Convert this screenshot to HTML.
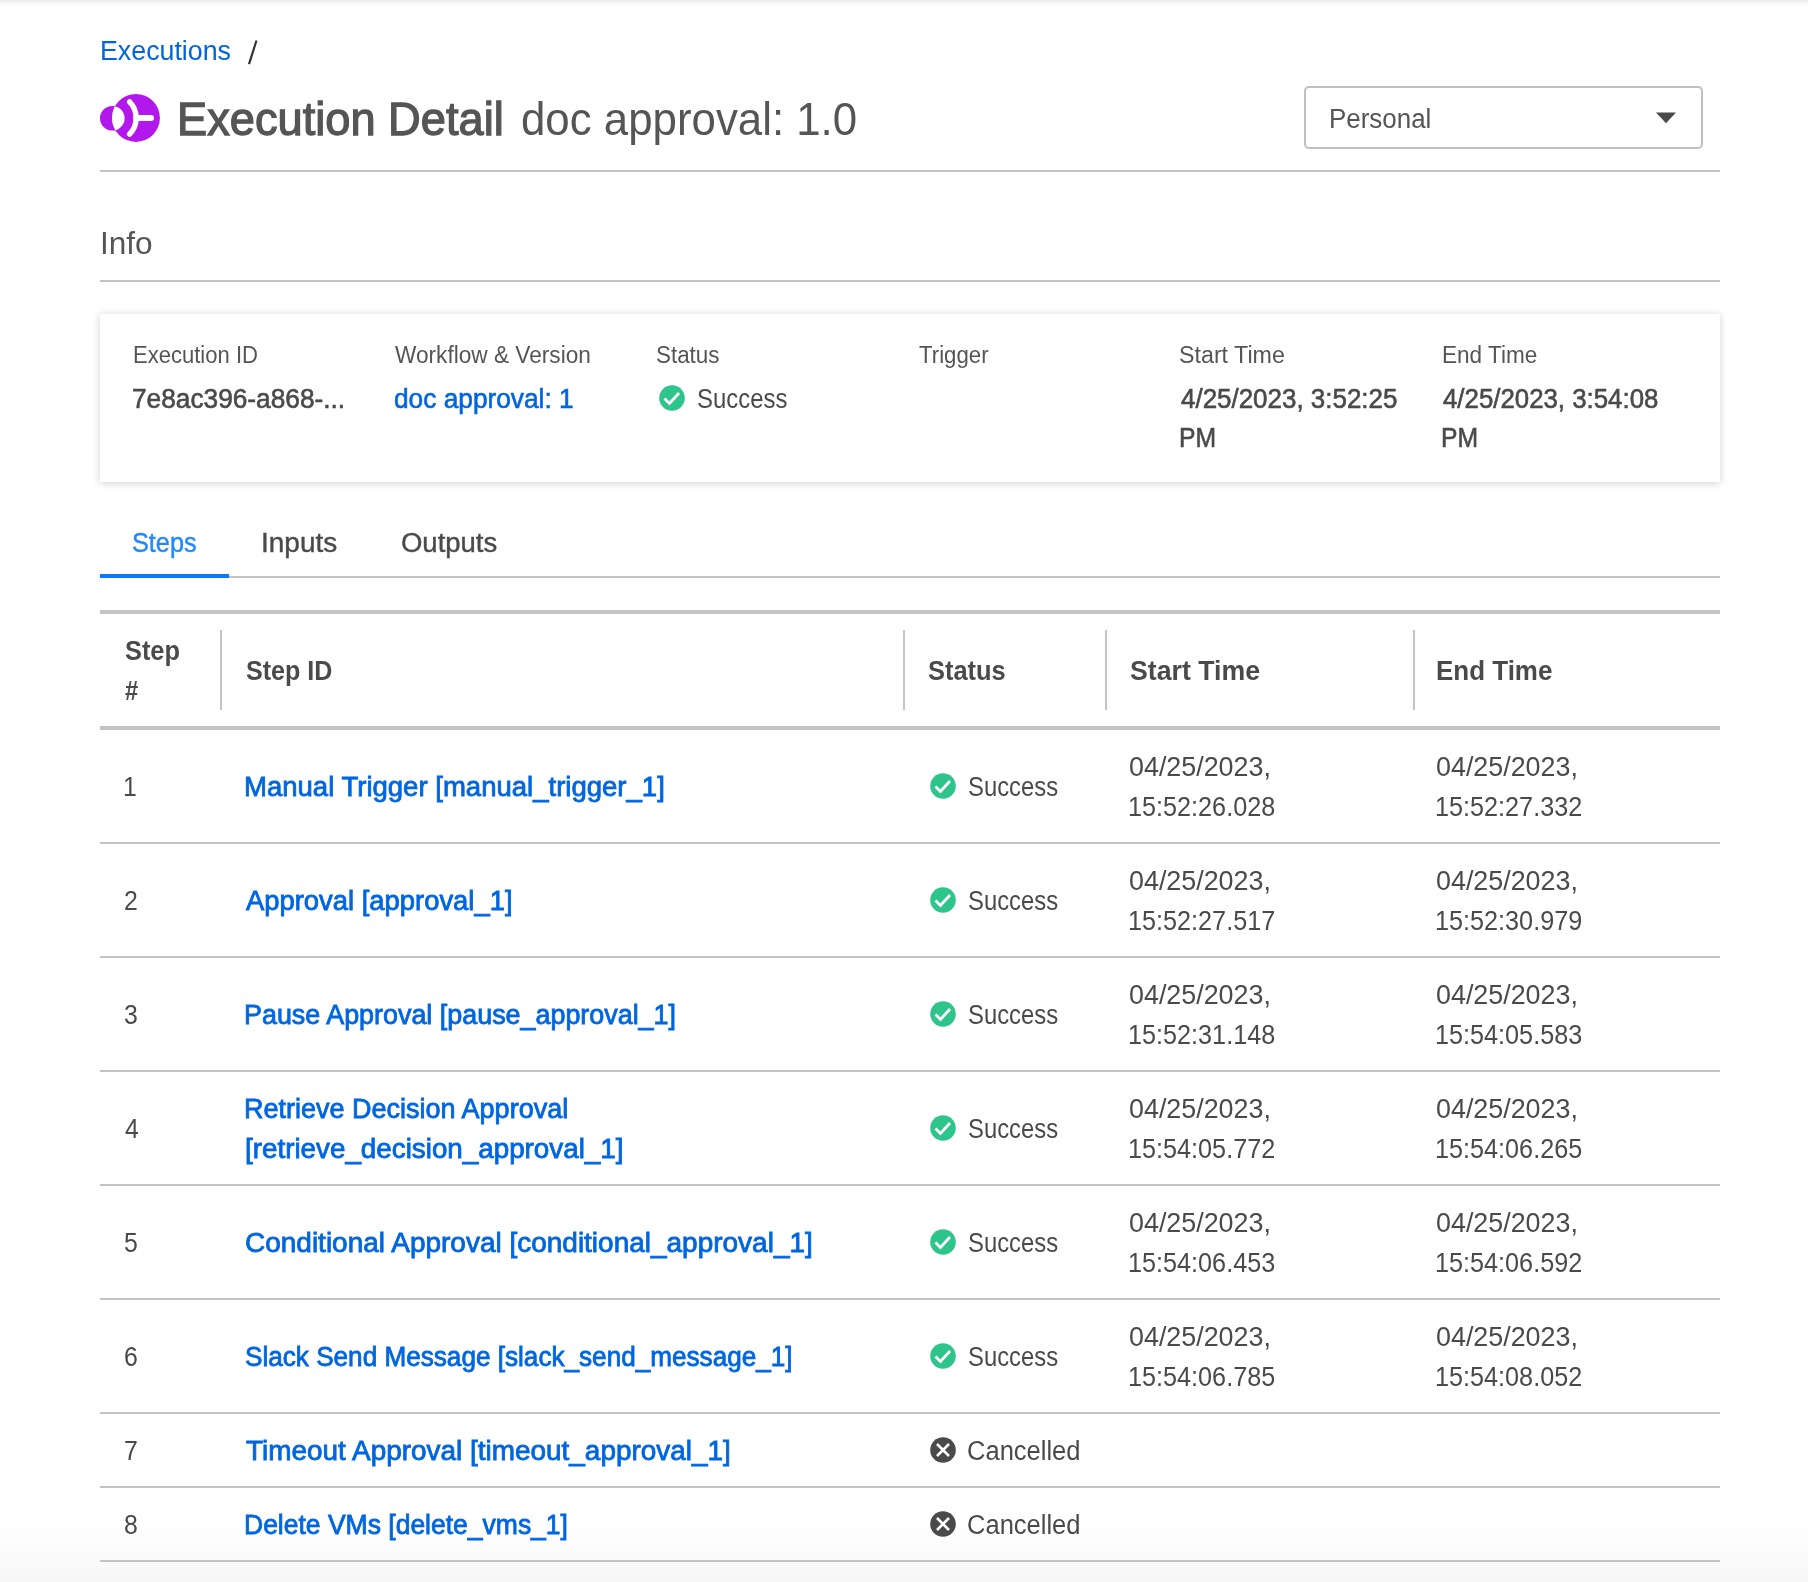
<!DOCTYPE html>
<html><head><meta charset="utf-8"><style>
html,body{margin:0;padding:0;}
body{width:1808px;height:1582px;position:relative;overflow:hidden;background:#fff;font-family:"Liberation Sans",sans-serif;}
.t{position:absolute;white-space:nowrap;transform-origin:0 0;}
.r{position:absolute;}
.txt{position:absolute;left:0;top:0;width:1808px;height:1582px;will-change:transform;}
.topsh{position:absolute;left:0;top:0;width:1808px;height:9px;background:linear-gradient(#e9e9e9 0px,#f4f4f4 2px,#fafafa 4px,#fdfdfd 6px,rgba(255,255,255,0) 9px);}
.botsh{position:absolute;left:0;top:1520px;width:1808px;height:62px;background:linear-gradient(rgba(247,247,247,0),#f7f7f7);}
.card{position:absolute;left:100px;top:314px;width:1620px;height:168px;background:#fff;box-shadow:0 1px 8px rgba(0,0,0,0.19);}
.dd{position:absolute;left:1304px;top:86px;width:395px;height:59px;border:2px solid #bfbfbf;border-radius:5px;background:#fff;}
</style></head><body>
<div class="botsh"></div>
<div class="topsh"></div>
<div class="card"></div>
<div class="dd"></div>
<div class="r" style="left:100px;top:170px;width:1620px;height:2px;background:#c4c4c4"></div><div class="r" style="left:100px;top:280px;width:1620px;height:2px;background:#c4c4c4"></div><div class="r" style="left:100px;top:576px;width:1620px;height:2px;background:#c4c4c4"></div><div class="r" style="left:100px;top:574px;width:129px;height:4px;background:#0a7bff"></div><div class="r" style="left:100px;top:610px;width:1620px;height:4px;background:#c4c4c4"></div><div class="r" style="left:220px;top:630px;width:2px;height:80px;background:#c4c4c4"></div><div class="r" style="left:903px;top:630px;width:2px;height:80px;background:#c4c4c4"></div><div class="r" style="left:1105px;top:630px;width:2px;height:80px;background:#c4c4c4"></div><div class="r" style="left:1413px;top:630px;width:2px;height:80px;background:#c4c4c4"></div><div class="r" style="left:100px;top:726px;width:1620px;height:4px;background:#c4c4c4"></div><div class="r" style="left:100px;top:842px;width:1620px;height:2px;background:#c4c4c4"></div><div class="r" style="left:100px;top:956px;width:1620px;height:2px;background:#c4c4c4"></div><div class="r" style="left:100px;top:1070px;width:1620px;height:2px;background:#c4c4c4"></div><div class="r" style="left:100px;top:1184px;width:1620px;height:2px;background:#c4c4c4"></div><div class="r" style="left:100px;top:1298px;width:1620px;height:2px;background:#c4c4c4"></div><div class="r" style="left:100px;top:1412px;width:1620px;height:2px;background:#c4c4c4"></div><div class="r" style="left:100px;top:1486px;width:1620px;height:2px;background:#c4c4c4"></div><div class="r" style="left:100px;top:1560px;width:1620px;height:2px;background:#c4c4c4"></div>
<svg style="position:absolute;left:0;top:0" width="1808" height="1582" viewBox="0 0 1808 1582">
<path fill="#b218ec" fill-rule="evenodd" d="M111.9 117.9A24 24 0 1 0 159.9 117.9A24 24 0 1 0 111.9 117.9Z M100 118.3A12.3 12.3 0 1 0 124.6 118.3A12.3 12.3 0 1 0 100 118.3Z"/>
<path d="M129.6 101.9A23 23 0 0 1 129.6 134.1" fill="none" stroke="#fff" stroke-width="5.4" stroke-linecap="round"/>
<path d="M136 118H151" fill="none" stroke="#fff" stroke-width="6" stroke-linecap="round"/>
<path d="M1656 112.5H1676L1666 123.3Z" fill="#4a4a4a"/>
<path d="M256.5 40.5L249 64.2" stroke="#333" stroke-width="2.2" fill="none"/>
<circle cx="943" cy="786.0" r="12.8" fill="#2dc58c"/><path d="M935.5 786.4 L940.5 791.4 L950 781.0" fill="none" stroke="#fff" stroke-width="2.8" stroke-linecap="butt" stroke-linejoin="miter"/><circle cx="943" cy="900.0" r="12.8" fill="#2dc58c"/><path d="M935.5 900.4 L940.5 905.4 L950 895.0" fill="none" stroke="#fff" stroke-width="2.8" stroke-linecap="butt" stroke-linejoin="miter"/><circle cx="943" cy="1014.0" r="12.8" fill="#2dc58c"/><path d="M935.5 1014.4 L940.5 1019.4 L950 1009.0" fill="none" stroke="#fff" stroke-width="2.8" stroke-linecap="butt" stroke-linejoin="miter"/><circle cx="943" cy="1128.0" r="12.8" fill="#2dc58c"/><path d="M935.5 1128.4 L940.5 1133.4 L950 1123.0" fill="none" stroke="#fff" stroke-width="2.8" stroke-linecap="butt" stroke-linejoin="miter"/><circle cx="943" cy="1242.0" r="12.8" fill="#2dc58c"/><path d="M935.5 1242.4 L940.5 1247.4 L950 1237.0" fill="none" stroke="#fff" stroke-width="2.8" stroke-linecap="butt" stroke-linejoin="miter"/><circle cx="943" cy="1356.0" r="12.8" fill="#2dc58c"/><path d="M935.5 1356.4 L940.5 1361.4 L950 1351.0" fill="none" stroke="#fff" stroke-width="2.8" stroke-linecap="butt" stroke-linejoin="miter"/><circle cx="943" cy="1450.0" r="12.8" fill="#4a4a4a"/><path d="M937 1444.0 L949 1456.0 M949 1444.0 L937 1456.0" fill="none" stroke="#fff" stroke-width="2.6"/><circle cx="943" cy="1524.0" r="12.8" fill="#4a4a4a"/><path d="M937 1518.0 L949 1530.0 M949 1518.0 L937 1530.0" fill="none" stroke="#fff" stroke-width="2.6"/><circle cx="672" cy="398" r="12.8" fill="#2dc58c"/><path d="M664.5 398.4 L669.5 403.4 L679 393" fill="none" stroke="#fff" stroke-width="2.8"/>
</svg>
<div class="txt"><span class="t" style="left:100.02px;top:34.00px;font-size:27px;line-height:34px;color:#0066e0;transform:scaleX(0.9917);">Executions</span><span class="t" style="left:177.40px;top:90.00px;font-size:46px;line-height:58px;color:#555555;transform:scaleX(0.9829);-webkit-text-stroke:1.3px #555555;">Execution Detail</span><span class="t" style="left:521.35px;top:90.00px;font-size:46px;line-height:58px;color:#555555;transform:scaleX(0.9525);">doc approval: 1.0</span><span class="t" style="left:1329.08px;top:102.00px;font-size:27px;line-height:34px;color:#555555;transform:scaleX(0.9608);">Personal</span><span class="t" style="left:100.33px;top:224.00px;font-size:30.5px;line-height:38px;color:#555555;transform:scaleX(1.0353);">Info</span><span class="t" style="left:132.64px;top:341.00px;font-size:23px;line-height:29px;color:#555555;transform:scaleX(0.9582);">Execution ID</span><span class="t" style="left:395.10px;top:341.00px;font-size:23px;line-height:29px;color:#555555;transform:scaleX(0.9844);">Workflow &amp; Version</span><span class="t" style="left:656.03px;top:341.00px;font-size:23px;line-height:29px;color:#555555;transform:scaleX(0.9732);">Status</span><span class="t" style="left:918.60px;top:341.00px;font-size:23px;line-height:29px;color:#555555;transform:scaleX(0.9663);">Trigger</span><span class="t" style="left:1179.49px;top:341.00px;font-size:23px;line-height:29px;color:#555555;transform:scaleX(1.0104);">Start Time</span><span class="t" style="left:1442.02px;top:341.00px;font-size:23px;line-height:29px;color:#555555;transform:scaleX(0.9814);">End Time</span><span class="t" style="left:132.33px;top:381.50px;font-size:27px;line-height:34px;color:#4a4a4a;transform:scaleX(0.9725);-webkit-text-stroke:0.6px #4a4a4a;">7e8ac396-a868-...</span><span class="t" style="left:394.33px;top:381.50px;font-size:27px;line-height:34px;color:#0066e0;transform:scaleX(0.9731);-webkit-text-stroke:0.6px #0066e0;">doc approval: 1</span><span class="t" style="left:696.61px;top:381.50px;font-size:27px;line-height:34px;color:#4a4a4a;transform:scaleX(0.8852);">Success</span><span class="t" style="left:1180.80px;top:381.50px;font-size:27px;line-height:34px;color:#4a4a4a;transform:scaleX(0.9608);-webkit-text-stroke:0.6px #4a4a4a;">4/25/2023, 3:52:25</span><span class="t" style="left:1178.97px;top:421.00px;font-size:27px;line-height:34px;color:#4a4a4a;transform:scaleX(0.9160);-webkit-text-stroke:0.6px #4a4a4a;">PM</span><span class="t" style="left:1443.30px;top:381.50px;font-size:27px;line-height:34px;color:#4a4a4a;transform:scaleX(0.9563);-webkit-text-stroke:0.6px #4a4a4a;">4/25/2023, 3:54:08</span><span class="t" style="left:1441.47px;top:421.00px;font-size:27px;line-height:34px;color:#4a4a4a;transform:scaleX(0.9160);-webkit-text-stroke:0.6px #4a4a4a;">PM</span><span class="t" style="left:132.46px;top:526.00px;font-size:27px;line-height:34px;color:#1e88ff;transform:scaleX(0.9357);-webkit-text-stroke:0.4px #1e88ff;">Steps</span><span class="t" style="left:261.13px;top:526.00px;font-size:27px;line-height:34px;color:#4a4a4a;transform:scaleX(1.0359);-webkit-text-stroke:0.4px #4a4a4a;">Inputs</span><span class="t" style="left:401.48px;top:526.00px;font-size:27px;line-height:34px;color:#4a4a4a;transform:scaleX(1.0177);-webkit-text-stroke:0.4px #4a4a4a;">Outputs</span><span class="t" style="left:124.90px;top:634.00px;font-size:27px;line-height:34px;color:#4a4a4a;font-weight:700;transform:scaleX(0.9394);">Step</span><span class="t" style="left:124.90px;top:674.00px;font-size:27px;line-height:34px;color:#4a4a4a;font-weight:700;transform:scaleX(0.8800);">#</span><span class="t" style="left:245.70px;top:654.00px;font-size:27px;line-height:34px;color:#4a4a4a;font-weight:700;transform:scaleX(0.9296);">Step ID</span><span class="t" style="left:928.30px;top:654.00px;font-size:27px;line-height:34px;color:#4a4a4a;font-weight:700;transform:scaleX(0.9411);">Status</span><span class="t" style="left:1129.70px;top:654.00px;font-size:27px;line-height:34px;color:#4a4a4a;font-weight:700;transform:scaleX(0.9884);">Start Time</span><span class="t" style="left:1436.34px;top:654.00px;font-size:27px;line-height:34px;color:#4a4a4a;font-weight:700;transform:scaleX(0.9616);">End Time</span><span class="t" style="left:123.16px;top:770.00px;font-size:27px;line-height:34px;color:#4a4a4a;transform:scaleX(0.9200);">1</span><span class="t" style="left:243.96px;top:770.00px;font-size:27px;line-height:34px;color:#0066e0;transform:scaleX(1.0195);-webkit-text-stroke:0.8px #0066e0;">Manual Trigger [manual_trigger_1]</span><span class="t" style="left:967.52px;top:770.00px;font-size:27px;line-height:34px;color:#4a4a4a;transform:scaleX(0.8832);">Success</span><span class="t" style="left:1129.01px;top:750.00px;font-size:27px;line-height:34px;color:#4a4a4a;transform:scaleX(0.9948);">04/25/2023,</span><span class="t" style="left:1128.43px;top:790.00px;font-size:27px;line-height:34px;color:#4a4a4a;transform:scaleX(0.9338);">15:52:26.028</span><span class="t" style="left:1436.31px;top:750.00px;font-size:27px;line-height:34px;color:#4a4a4a;transform:scaleX(0.9948);">04/25/2023,</span><span class="t" style="left:1435.43px;top:790.00px;font-size:27px;line-height:34px;color:#4a4a4a;transform:scaleX(0.9338);">15:52:27.332</span><span class="t" style="left:124.08px;top:884.00px;font-size:27px;line-height:34px;color:#4a4a4a;transform:scaleX(0.9200);">2</span><span class="t" style="left:246.00px;top:884.00px;font-size:27px;line-height:34px;color:#0066e0;transform:scaleX(1.0147);-webkit-text-stroke:0.8px #0066e0;">Approval [approval_1]</span><span class="t" style="left:967.52px;top:884.00px;font-size:27px;line-height:34px;color:#4a4a4a;transform:scaleX(0.8832);">Success</span><span class="t" style="left:1129.01px;top:864.00px;font-size:27px;line-height:34px;color:#4a4a4a;transform:scaleX(0.9948);">04/25/2023,</span><span class="t" style="left:1128.43px;top:904.00px;font-size:27px;line-height:34px;color:#4a4a4a;transform:scaleX(0.9338);">15:52:27.517</span><span class="t" style="left:1436.31px;top:864.00px;font-size:27px;line-height:34px;color:#4a4a4a;transform:scaleX(0.9948);">04/25/2023,</span><span class="t" style="left:1435.43px;top:904.00px;font-size:27px;line-height:34px;color:#4a4a4a;transform:scaleX(0.9338);">15:52:30.979</span><span class="t" style="left:124.08px;top:998.00px;font-size:27px;line-height:34px;color:#4a4a4a;transform:scaleX(0.9200);">3</span><span class="t" style="left:244.01px;top:998.00px;font-size:27px;line-height:34px;color:#0066e0;transform:scaleX(0.9958);-webkit-text-stroke:0.8px #0066e0;">Pause Approval [pause_approval_1]</span><span class="t" style="left:967.52px;top:998.00px;font-size:27px;line-height:34px;color:#4a4a4a;transform:scaleX(0.8832);">Success</span><span class="t" style="left:1129.01px;top:978.00px;font-size:27px;line-height:34px;color:#4a4a4a;transform:scaleX(0.9948);">04/25/2023,</span><span class="t" style="left:1128.43px;top:1018.00px;font-size:27px;line-height:34px;color:#4a4a4a;transform:scaleX(0.9338);">15:52:31.148</span><span class="t" style="left:1436.31px;top:978.00px;font-size:27px;line-height:34px;color:#4a4a4a;transform:scaleX(0.9948);">04/25/2023,</span><span class="t" style="left:1435.43px;top:1018.00px;font-size:27px;line-height:34px;color:#4a4a4a;transform:scaleX(0.9338);">15:54:05.583</span><span class="t" style="left:125.00px;top:1112.00px;font-size:27px;line-height:34px;color:#4a4a4a;transform:scaleX(0.9200);">4</span><span class="t" style="left:244.00px;top:1092.00px;font-size:27px;line-height:34px;color:#0066e0;-webkit-text-stroke:0.8px #0066e0;">Retrieve Decision Approval</span><span class="t" style="left:244.97px;top:1132.00px;font-size:27px;line-height:34px;color:#0066e0;transform:scaleX(1.0292);-webkit-text-stroke:0.8px #0066e0;">[retrieve_decision_approval_1]</span><span class="t" style="left:967.52px;top:1112.00px;font-size:27px;line-height:34px;color:#4a4a4a;transform:scaleX(0.8832);">Success</span><span class="t" style="left:1129.01px;top:1092.00px;font-size:27px;line-height:34px;color:#4a4a4a;transform:scaleX(0.9948);">04/25/2023,</span><span class="t" style="left:1128.43px;top:1132.00px;font-size:27px;line-height:34px;color:#4a4a4a;transform:scaleX(0.9338);">15:54:05.772</span><span class="t" style="left:1436.31px;top:1092.00px;font-size:27px;line-height:34px;color:#4a4a4a;transform:scaleX(0.9948);">04/25/2023,</span><span class="t" style="left:1435.43px;top:1132.00px;font-size:27px;line-height:34px;color:#4a4a4a;transform:scaleX(0.9338);">15:54:06.265</span><span class="t" style="left:124.08px;top:1226.00px;font-size:27px;line-height:34px;color:#4a4a4a;transform:scaleX(0.9200);">5</span><span class="t" style="left:244.96px;top:1226.00px;font-size:27px;line-height:34px;color:#0066e0;transform:scaleX(1.0363);-webkit-text-stroke:0.8px #0066e0;">Conditional Approval [conditional_approval_1]</span><span class="t" style="left:967.52px;top:1226.00px;font-size:27px;line-height:34px;color:#4a4a4a;transform:scaleX(0.8832);">Success</span><span class="t" style="left:1129.01px;top:1206.00px;font-size:27px;line-height:34px;color:#4a4a4a;transform:scaleX(0.9948);">04/25/2023,</span><span class="t" style="left:1128.43px;top:1246.00px;font-size:27px;line-height:34px;color:#4a4a4a;transform:scaleX(0.9338);">15:54:06.453</span><span class="t" style="left:1436.31px;top:1206.00px;font-size:27px;line-height:34px;color:#4a4a4a;transform:scaleX(0.9948);">04/25/2023,</span><span class="t" style="left:1435.43px;top:1246.00px;font-size:27px;line-height:34px;color:#4a4a4a;transform:scaleX(0.9338);">15:54:06.592</span><span class="t" style="left:124.08px;top:1340.00px;font-size:27px;line-height:34px;color:#4a4a4a;transform:scaleX(0.9200);">6</span><span class="t" style="left:245.03px;top:1340.00px;font-size:27px;line-height:34px;color:#0066e0;transform:scaleX(0.9678);-webkit-text-stroke:0.8px #0066e0;">Slack Send Message [slack_send_message_1]</span><span class="t" style="left:967.52px;top:1340.00px;font-size:27px;line-height:34px;color:#4a4a4a;transform:scaleX(0.8832);">Success</span><span class="t" style="left:1129.01px;top:1320.00px;font-size:27px;line-height:34px;color:#4a4a4a;transform:scaleX(0.9948);">04/25/2023,</span><span class="t" style="left:1128.43px;top:1360.00px;font-size:27px;line-height:34px;color:#4a4a4a;transform:scaleX(0.9338);">15:54:06.785</span><span class="t" style="left:1436.31px;top:1320.00px;font-size:27px;line-height:34px;color:#4a4a4a;transform:scaleX(0.9948);">04/25/2023,</span><span class="t" style="left:1435.43px;top:1360.00px;font-size:27px;line-height:34px;color:#4a4a4a;transform:scaleX(0.9338);">15:54:08.052</span><span class="t" style="left:124.08px;top:1434.00px;font-size:27px;line-height:34px;color:#4a4a4a;transform:scaleX(0.9200);">7</span><span class="t" style="left:246.00px;top:1434.00px;font-size:27px;line-height:34px;color:#0066e0;transform:scaleX(1.0342);-webkit-text-stroke:0.8px #0066e0;">Timeout Approval [timeout_approval_1]</span><span class="t" style="left:967.05px;top:1434.00px;font-size:27px;line-height:34px;color:#4a4a4a;transform:scaleX(0.9453);">Cancelled</span><span class="t" style="left:124.08px;top:1508.00px;font-size:27px;line-height:34px;color:#4a4a4a;transform:scaleX(0.9200);">8</span><span class="t" style="left:244.04px;top:1508.00px;font-size:27px;line-height:34px;color:#0066e0;transform:scaleX(0.9812);-webkit-text-stroke:0.8px #0066e0;">Delete VMs [delete_vms_1]</span><span class="t" style="left:967.05px;top:1508.00px;font-size:27px;line-height:34px;color:#4a4a4a;transform:scaleX(0.9453);">Cancelled</span></div>
</body></html>
